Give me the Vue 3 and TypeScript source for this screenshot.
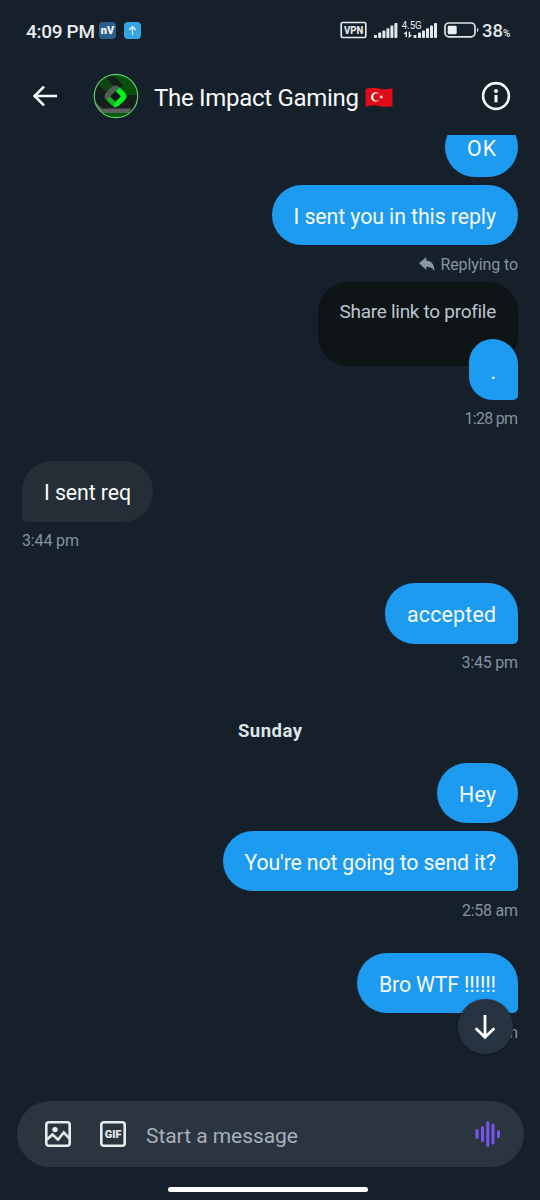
<script setup lang="ts">
import type { Directive } from 'vue'

interface Message {
  text: string
  width: number
  side: 'out' | 'in'
  tail?: boolean
  time?: string
  timeWidth?: number
}

// Spreads the letters of a label so that it fills its design width.
const vFit: Directive<HTMLElement, number> = {
  mounted(el, binding) {
    const natural = el.getBoundingClientRect().width
    const count = (el.textContent ?? '').length
    if (count > 1) el.style.letterSpacing = `${(binding.value - natural) / (count - 1)}px`
    el.style.width = `${binding.value}px`
  },
}

const beforeReply: Message[] = [
  { text: 'OK', width: 29, side: 'out' },
  { text: 'I sent you in this reply', width: 202.5, side: 'out' },
]
const friday: Message[] = [
  { text: 'I sent req', width: 87, side: 'in', tail: true, time: '3:44 pm', timeWidth: 57 },
  { text: 'accepted', width: 89, side: 'out', tail: true, time: '3:45 pm', timeWidth: 56.5 },
]
const sunday: Message[] = [
  { text: 'Hey', width: 37, side: 'out' },
  { text: "You're not going to send it?", width: 251.5, side: 'out', tail: true, time: '2:58 am', timeWidth: 56 },
  { text: 'Bro WTF !!!!!!', width: 117, side: 'out', tail: true, time: '2:58 am', timeWidth: 56 },
]
</script>

<template>
  <main class="phone">
    <div class="status">
      <span v-fit="69" class="clock">4:09 PM</span>
      <span class="chip nv"><b>nV</b></span>
      <span class="chip up">
        <svg width="17" height="17" viewBox="0 0 17 17"><path d="M8.5 13V4.7M5.2 8l3.3-3.4L11.8 8" fill="none" stroke="#e9f7ff" stroke-width="1.1" /></svg>
      </span>
      <svg class="signals" width="140" height="24" viewBox="340 18 140 24">
        <rect x="341.2" y="22.5" width="24.6" height="15" rx="1.5" fill="none" stroke="#e4e8eb" stroke-width="1.7" />
        <text x="343.9" y="33.8" font-size="10" font-weight="800" textLength="19.4" lengthAdjust="spacingAndGlyphs" class="svg-text">VPN</text>
        <g fill="#e4e8eb">
          <rect x="374" y="35" width="3" height="3" rx=".8" /><rect x="378.2" y="32.6" width="3" height="5.4" rx=".8" />
          <rect x="382.4" y="30.6" width="3" height="7.4" rx=".8" /><rect x="386.4" y="28.2" width="3" height="9.8" rx=".8" />
          <rect x="390.4" y="25.6" width="3" height="12.4" rx=".8" /><rect x="394.4" y="23" width="3" height="15" rx=".8" />
          <rect x="413.5" y="35" width="3" height="3" rx=".8" /><rect x="418" y="32.6" width="3" height="5.4" rx=".8" />
          <rect x="422" y="30.6" width="3" height="7.4" rx=".8" /><rect x="426" y="28.2" width="3" height="9.8" rx=".8" />
          <rect x="430" y="25.6" width="3" height="12.4" rx=".8" /><rect x="434" y="23" width="3" height="15" rx=".8" />
        </g>
        <text x="401.7" y="28.6" font-size="10" textLength="20" lengthAdjust="spacingAndGlyphs" class="svg-text">4.5G</text>
        <path d="M406.3 37v-4.600l-2 1.600M409.400 31.700v5l2-1.800" fill="none" stroke="#e4e8eb" stroke-width="1.4" />
        <rect x="445" y="23" width="30" height="13.8" rx="4" fill="none" stroke="#dfe3e6" stroke-width="1.7" />
        <rect x="447.7" y="25.7" width="9" height="8.6" rx="1.4" fill="#eceeef" />
        <path d="M477 28q1.3.2 1.3 2t-1.3 2z" fill="#dfe3e6" />
      </svg>
      <span class="percent"><span>38</span><small>%</small></span>
    </div>

    <header class="top">
      <svg class="back" width="26" height="24" viewBox="0 0 26 24"><path d="M25 12H2.500M12 2.600 2.600 12l9.400 9.400" fill="none" stroke="#f7f9f9" stroke-width="2.700" /></svg>
      <svg class="avatar" width="46" height="46" viewBox="0 0 46 46">
        <defs><clipPath id="disc"><circle cx="23" cy="23" r="21.500" /></clipPath></defs>
        <g clip-path="url(#disc)">
          <rect width="46" height="46" fill="#181d1d" />
          <path d="M14 0h30v22H32L18 6z" fill="#06500b" />
          <path d="m5 12 8-8 8 9-7 6z" fill="#0f4516" />
          <path d="m14 3 5-2 11 11-4 3z" fill="#171c1c" />
          <path d="m0 27 9 8.500h29l-2 4.500H4z" fill="#5b5f5e" />
          <path d="M4 40h38l-8 6H10z" fill="#055b0c" />
          <g fill="none" stroke-width="5.200">
            <rect x="16" y="16.800" width="13" height="13" rx="3.500" transform="rotate(45 22.500 23.300)" fill="#0a1712" stroke="#14b622" />
            <path d="M15.200 25.300q-2-2 0-4l5-5q2.300-2.300 4.600 0" stroke="#545b58" />
            <path d="m25 16.500 5 5q2 1.800 0 3.600l-5.500 5.400q-1.500 1.500-3 .8" stroke="#06ef1e" />
          </g>
        </g>
        <circle cx="23" cy="23" r="21.700" fill="none" stroke="#58cf68" stroke-width="1.200" />
      </svg>
      <h1><span v-fit="205">The Impact Gaming</span></h1>
      <svg class="flag" width="28" height="21" viewBox="0 0 28 21">
        <path d="M.5 2Q7-.3 14 1.500T27.500 1v18q-7 1.700-13.500 0T.5 20z" fill="#e00b18" />
        <circle cx="10.700" cy="10" r="4.700" fill="#fff" /><circle cx="12" cy="10" r="3.700" fill="#e00b18" />
        <path d="m14 10 1.600-.5V7.900l.9 1.100 1.500-.5-.9 1.500.9 1.300-1.500-.4-.9 1.100v-1.500z" fill="#fff" />
      </svg>
      <svg class="info" width="30" height="30" viewBox="0 0 30 30">
        <circle cx="15" cy="15" r="12.900" fill="none" stroke="#f7f9f9" stroke-width="2.600" />
        <circle cx="15" cy="9.900" r="2" fill="#f7f9f9" /><path d="M13.500 14h3v7.300h-3z" fill="#f7f9f9" />
      </svg>
    </header>

    <section class="thread">
      <div class="group first">
        <div v-for="m in beforeReply" :key="m.text" class="bubble out"><span v-fit="m.width">{{ m.text }}</span></div>
      </div>

      <div class="replying">
        <svg width="16" height="15" viewBox="0 0 16 15"><path d="M0 6.200 7.300 0v3.600c5 .2 8 3.400 8.100 10.400-2-3-4.300-4.300-8.100-4.300v3.200z" fill="#8899a3" /></svg>
        <span v-fit="77.500">Replying to</span>
      </div>
      <div class="quoted"><span v-fit="156">Share link to profile</span></div>
      <div class="bubble out tail dot"><span>.</span></div>
      <div class="time out"><span v-fit="53.500">1:28 pm</span></div>

      <template v-for="m in friday" :key="m.text">
        <div class="bubble raised spaced" :class="[m.side, { tail: m.tail }]"><span v-fit="m.width">{{ m.text }}</span></div>
        <div class="time" :class="m.side"><span v-fit="m.timeWidth ?? 56">{{ m.time }}</span></div>
      </template>

      <h2><span v-fit="64">Sunday</span></h2>

      <template v-for="(m, i) in sunday" :key="m.text">
        <div class="bubble" :class="[m.side, { tail: m.tail, near: i === 1, spaced: i === 2 }]"><span v-fit="m.width">{{ m.text }}</span></div>
        <div v-if="m.time" class="time" :class="m.side"><span v-fit="m.timeWidth ?? 56">{{ m.time }}</span></div>
      </template>

      <button class="jump" aria-label="Scroll to latest">
        <svg width="22" height="26" viewBox="0 0 22 26"><path d="M11 1v22M1.700 14.200 11 23.300l9.300-9.100" fill="none" stroke="#fff" stroke-width="2.800" /></svg>
      </button>
    </section>

    <footer class="composer">
      <svg width="26" height="26" viewBox="0 0 26 26">
        <rect x="1.300" y="1.300" width="23.400" height="23.400" rx="2.500" fill="none" stroke="#e7edef" stroke-width="2.600" />
        <circle cx="10" cy="8.600" r="2.700" fill="#e7edef" />
        <path d="m2 18.500 5.500-5 5.500 5.200 5.800-7.200 5.800 6.200" fill="none" stroke="#e7edef" stroke-width="2.600" />
      </svg>
      <svg width="26" height="26" viewBox="0 0 26 26">
        <rect x="1.300" y="1.300" width="23.400" height="23.400" rx="2.500" fill="none" stroke="#e7edef" stroke-width="2.600" />
        <text x="4.700" y="16.800" font-size="10.500" font-weight="900" textLength="16.800" lengthAdjust="spacingAndGlyphs" class="svg-text">GIF</text>
      </svg>
      <span v-fit="152" class="placeholder">Start a message</span>
      <svg class="voice" width="26" height="28" viewBox="0 0 26 28">
        <path d="M2 10.500v7M7.500 7.500v13M12.800 2.500v23M18 5v18M23.500 11.500v5" stroke="#7856ee" stroke-width="3" stroke-linecap="round" />
      </svg>
    </footer>
    <div class="home"></div>
  </main>
</template>

<style>
body { background: #16202a; }
</style>

<style scoped>
.phone {
  box-sizing: border-box;
  width: 540px;
  height: 1200px;
  overflow: hidden;
  display: flex;
  flex-direction: column;
  background: #16202a;
  color: #f7f9f9;
  font-family: Roboto, "Liberation Sans", sans-serif;
}
span { white-space: nowrap; }
.svg-text { fill: #e7ebed; font-family: Roboto, sans-serif; }
.status {
  height: 60px;
  flex: none;
  box-sizing: border-box;
  padding-left: 26px;
  display: flex;
  align-items: center;
}
.clock { font-size: 19px; font-weight: 500; color: #e9ecee; margin-top: 2px; }
.chip {
  width: 17px;
  height: 17px;
  border-radius: 4px;
  display: flex;
  align-items: center;
  justify-content: center;
}
.nv { margin-left: 4px; background: #2c5f8c; font-size: 11px; }
.nv b { font-weight: 900; }
.up { margin-left: 8px; background: #38a5e2; }
.signals { margin-left: 199px; flex: none; }
.percent { display: flex; align-items: baseline; margin: 2px 0 0 2px; font-size: 18.500px; font-weight: 500; color: #e4e8eb; }
.percent > span { margin-right: -1px; }
.percent small { font-size: 10px; margin-left: 1px; }
.top {
  height: 74.500px;
  flex: none;
  display: flex;
  align-items: center;
  box-sizing: border-box;
  padding: 0 29px 2px 32px;
}
.avatar { margin-left: 34.500px; }
h1 { margin: 3px 0 0 15.500px; font-size: 24px; font-weight: 400; line-height: 30px; }
h1 span, h2 span { display: block; }
.flag { margin: 3px 0 0 5.500px; }
.info { margin-left: auto; }
.thread {
  position: relative;
  flex: 1;
  min-height: 0;
  overflow: hidden;
  padding: 0 22px;
  display: flex;
  flex-direction: column;
}
.group { display: flex; flex-direction: column; align-items: flex-end; gap: 7.500px; flex: none; }
.first { margin-top: -18px; }
.bubble {
  box-sizing: border-box;
  flex: none;
  height: 60.500px;
  padding: 3px 22px 0;
  border-radius: 30px;
  display: flex;
  align-items: center;
  font-size: 21.300px;
}
.bubble.out { align-self: flex-end; background: #1d9bf0; }
.bubble.in { align-self: flex-start; background: #252e36; }
.bubble.raised { padding-top: 1.500px; }
.out.tail { border-bottom-right-radius: 5px; }
.in.tail { border-bottom-left-radius: 5px; }
.spaced { margin-top: 23.500px; }
.near { margin-top: 7.500px; }
.replying {
  height: 37.300px;
  padding-top: 1px;
  box-sizing: border-box;
  flex: none;
  display: flex;
  align-items: center;
  justify-content: flex-end;
  gap: 6px;
  font-size: 16px;
  color: #8493a0;
}
.quoted {
  box-sizing: border-box;
  flex: none;
  align-self: flex-end;
  height: 84px;
  padding: 19px 22px 0;
  border-radius: 30px;
  background: #0f1417;
  color: #bac6ce;
  font-size: 19px;
  line-height: 22px;
}
.dot { width: 49.500px; margin-top: -27px; border-radius: 25px 27px 5px 25px; justify-content: center; }
.time {
  height: 38px;
  flex: none;
  display: flex;
  align-items: center;
  font-size: 16px;
  color: #8492a0;
}
.time.out { justify-content: flex-end; }
h2 {
  flex: none;
  display: flex;
  justify-content: center;
  margin: 38.500px 0 20.500px;
  font-size: 18.500px;
  line-height: 22px;
  font-weight: 700;
  color: #dde3e8;
}
.jump {
  position: absolute;
  right: 27.500px;
  top: 864.500px;
  width: 55px;
  height: 55px;
  padding: 0;
  border: 0;
  border-radius: 50%;
  background: #273340;
  box-shadow: 0 1px 3px #0d141b80;
  display: flex;
  align-items: center;
  justify-content: center;
}
.composer {
  box-sizing: border-box;
  flex: none;
  height: 66px;
  margin: 0 16.500px;
  padding: 0 23px 0 28.500px;
  border-radius: 33px;
  background: #2a353f;
  display: flex;
  align-items: center;
  gap: 29px;
}
.placeholder { margin: 4px 0 0 -9px; font-size: 21px; color: #a6b0bb; }
.voice { margin-left: auto; }
.home { flex: none; width: 200px; height: 5.500px; border-radius: 3px; background: #fff; margin: 19.500px auto 8px 168px; }
</style>
